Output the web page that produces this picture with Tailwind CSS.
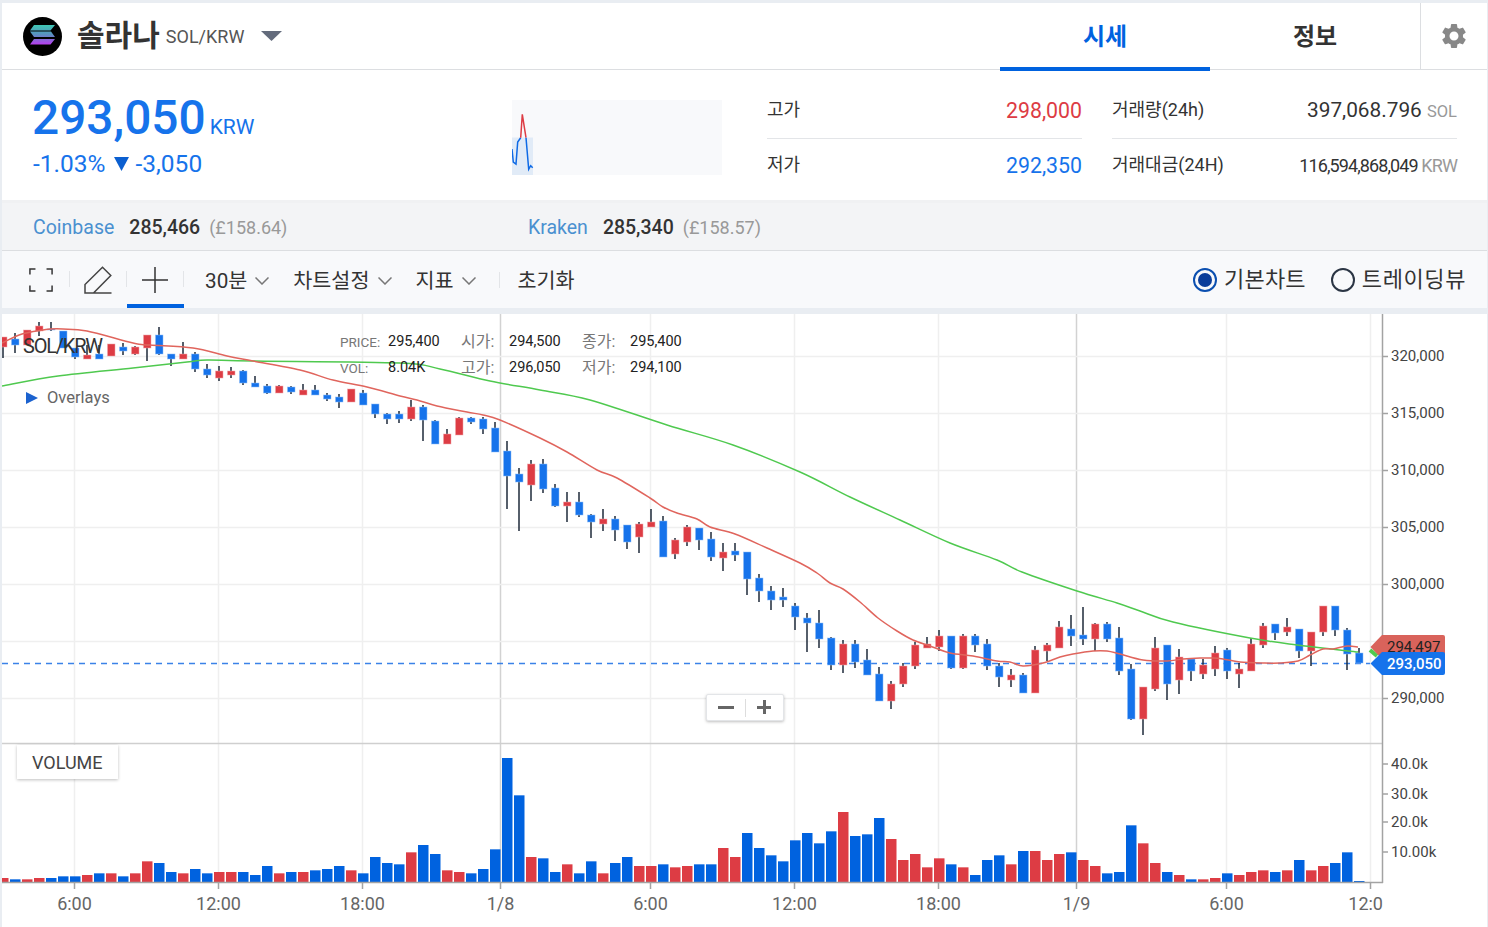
<!DOCTYPE html>
<html lang="ko">
<head>
<meta charset="utf-8">
<title>솔라나 SOL/KRW</title>
<script src="https://cdn.jsdelivr.net/npm/@tailwindcss/browser@4"></script>
</head>
<body class="bg-[#e9edf2] font-[Roboto,'Noto_Sans_CJK_KR',sans-serif] text-[#333] overflow-hidden">
<div class="ml-[2px] mr-[1px] pt-[3px] w-[1485px]">

  <!-- 헤더 -->
  <header class="flex items-center h-[67px] bg-white border-b border-[#dcdee1]">
    <svg class="ml-[21px] w-[39px] h-[39px] shrink-0" viewBox="0 0 39 39">
      <defs>
        <linearGradient id="sol" x1="0" y1="0" x2="0" y2="1">
          <stop offset="0" stop-color="#3fc8b4"/>
          <stop offset="0.5" stop-color="#5a8fc0"/>
          <stop offset="1" stop-color="#b93df0"/>
        </linearGradient>
      </defs>
      <circle cx="19.5" cy="19.5" r="19.5" fill="#000"/>
      <path fill="url(#sol)" d="M11 8h21l-4.500 5.500H7zM7 14.500h21l4 5.500H11zM11 22h21l-4.500 5.500H7z"/>
    </svg>
    <span class="ml-[15px] text-[30px] font-bold leading-none text-[#333]">솔라나</span>
    <span class="ml-[6px] text-[18px] text-[#555] mt-[1px]">SOL/KRW</span>
    <svg class="ml-[17px] w-[21px] h-[10px]" viewBox="0 0 21 10"><path d="M0 0h21L10.500 10z" fill="#636b7c"/></svg>
    <div class="ml-auto flex h-full">
      <div class="relative w-[210px] flex items-center justify-center pt-[2px] text-[24px] font-bold text-[#0062df]">
        시세
        <span class="absolute left-0 right-0 bottom-[-2px] h-[4px] bg-[#0062df]"></span>
      </div>
      <div class="w-[210px] flex items-center justify-center pt-[2px] text-[24px] font-bold text-[#333]">정보</div>
      <div class="w-[67px] border-l border-[#dcdee1] flex items-center justify-center">
        <svg class="w-[30px] h-[30px]" viewBox="0 0 24 24"><path fill="#888" d="M19.140 12.940c.040-.300.060-.610.060-.940 0-.320-.020-.640-.070-.940l2.030-1.580a.490.490 0 0 0 .120-.610l-1.920-3.320a.488.488 0 0 0-.590-.220l-2.390.960c-.500-.380-1.030-.700-1.620-.940l-.360-2.540a.484.484 0 0 0-.480-.410h-3.840c-.240 0-.430.170-.470.410l-.360 2.540c-.590.240-1.130.570-1.620.940l-2.390-.960c-.220-.080-.470 0-.590.220L2.740 8.870c-.120.210-.080.470.120.610l2.030 1.580c-.050.300-.090.630-.090.940s.020.640.070.940l-2.030 1.580a.490.490 0 0 0-.120.610l1.920 3.320c.120.220.370.290.590.220l2.390-.960c.500.380 1.030.700 1.620.940l.360 2.540c.050.240.240.410.480.410h3.840c.240 0 .440-.170.470-.410l.360-2.540c.590-.240 1.130-.560 1.620-.940l2.390.960c.220.080.470 0 .590-.220l1.920-3.320c.120-.220.070-.470-.120-.610l-2.010-1.580zM12 15.600c-1.980 0-3.600-1.620-3.600-3.600s1.620-3.600 3.600-3.600 3.600 1.620 3.600 3.600-1.620 3.600-3.600 3.600z"/></svg>
      </div>
    </div>
  </header>

  <!-- 현재가 -->
  <section class="flex h-[133px] bg-white border-b-[3px] border-[#f0f1f3]">
    <div class="w-[510px] pl-[30px] pt-[17px]">
      <div class="flex items-baseline text-[#1673eb]">
        <span class="text-[47.800px] font-medium leading-[62px]">293,050</span>
        <span class="ml-[4px] text-[21px]">KRW</span>
      </div>
      <div class="flex items-center ml-[1px] text-[24.500px] leading-[30px] text-[#1673eb]">
        <span>-1.03%</span>
        <svg class="ml-[9px] w-[15px] h-[14px]" viewBox="0 0 15 14"><path d="M0 0h15L7.500 14z" fill="#0b5fd0"/></svg>
        <span class="ml-[6px]">-3,050</span>
      </div>
    </div>
    <div class="mt-[30px] w-[210px] h-[75px] bg-[#f8f9fb] relative">
      <svg class="absolute inset-0" width="210" height="75" viewBox="512 100 210 75">
        <rect x="512" y="137.500" width="21" height="37.500" fill="#e1ebf7"/>
        <polyline fill="none" stroke="#0e6ae6" stroke-width="1.500" points="512,149 513.300,162 516,164 517.700,142 520.700,137.700"/>
        <polyline fill="none" stroke="#dd3c44" stroke-width="1.500" points="520.700,137.700 522.300,114.300 526,137.700"/>
        <polyline fill="none" stroke="#0e6ae6" stroke-width="1.500" points="526,137.700 528.700,169.300 530.700,165.700 532.700,167.700"/>
      </svg>
    </div>
    <div class="ml-[45px] w-[315px] pt-[14px]">
      <div class="flex items-center justify-between h-[55px] border-b border-[#e3e5e8]">
        <span class="text-[18px] -mt-[4px]">고가</span>
        <span class="text-[21.300px] text-[#dd3c44]">298,000</span>
      </div>
      <div class="flex items-center justify-between h-[54px]">
        <span class="text-[18px] -mt-[3px]">저가</span>
        <span class="text-[21.300px] text-[#1673eb]">292,350</span>
      </div>
    </div>
    <div class="ml-[30px] w-[345px] pt-[14px]">
      <div class="flex items-center justify-between h-[55px] border-b border-[#e3e5e8]">
        <span class="text-[18px] -mt-[4px]">거래량(24h)</span>
        <span class="text-[20.800px]">397,068.796 <span class="text-[16.500px] text-[#999]">SOL</span></span>
      </div>
      <div class="flex items-center justify-between h-[54px]">
        <span class="text-[18px] -mt-[3px]">거래대금(24H)</span>
        <span class="text-[18px] -mt-[1px] tracking-[-.9px]">116,594,868,049 <span class="text-[#999]">KRW</span></span>
      </div>
    </div>
  </section>

  <!-- 거래소 시세 -->
  <section class="flex items-center h-[48px] pt-[3px] bg-[#f3f4f6] border-b border-[#dcdee1] text-[19.500px]">
    <div class="w-[495px] pl-[31px] flex items-baseline">
      <span class="text-[#4a90d0]">Coinbase</span>
      <span class="ml-[15px] font-medium text-[#333]">285,466</span>
      <span class="ml-[9px] text-[18px] text-[#999]">(£158.64)</span>
    </div>
    <div class="pl-[31px] flex items-baseline">
      <span class="text-[#4a90d0]">Kraken</span>
      <span class="ml-[15px] font-medium text-[#333]">285,340</span>
      <span class="ml-[9px] text-[18px] text-[#999]">(£158.57)</span>
    </div>
  </section>

  <!-- 차트 툴바 -->
  <section class="flex items-center h-[57px] bg-[#f8f9fb] pl-[11px]">
    <div class="relative w-[57px] h-full flex items-center justify-center pr-[1px]">
      <svg class="w-[24px] h-[24px]" viewBox="0 0 26 26" fill="none" stroke="#333" stroke-width="1.600">
        <path d="M1 7V1h6M19 1h6v6M25 19v6h-6M7 25H1v-6"/>
      </svg>
      <span class="absolute right-0 top-[20px] h-[16px] w-px bg-[#e3e5e8]"></span>
    </div>
    <div class="relative w-[57px] h-full flex items-center justify-center pr-[2px]">
      <svg class="w-[28px] h-[28px]" viewBox="0 0 28 28" fill="none" stroke="#444" stroke-width="1.500">
        <path d="M1 27v-8.500L18.500 1.200 26.800 9.500 9.500 27zM1 27h8.500M9.500 27h18"/>
      </svg>
      <span class="absolute right-0 top-[20px] h-[16px] w-px bg-[#e3e5e8]"></span>
    </div>
    <div class="relative w-[57px] h-full flex items-center justify-center pr-[1px]">
      <svg class="w-[26px] h-[26px]" viewBox="0 0 26 26" fill="none" stroke="#333" stroke-width="1.500">
        <path d="M13 0v26M0 13h26"/>
      </svg>
      <span class="absolute left-0 right-0 bottom-0 h-[4px] bg-[#0062df]"></span>
      <span class="absolute right-0 top-[20px] h-[16px] w-px bg-[#e3e5e8]"></span>
    </div>
    <button class="ml-[21px] mt-[4px] flex items-center text-[20.700px]">30분
      <svg class="ml-[8px] w-[14px] h-[8px]" viewBox="0 0 14 8" fill="none" stroke="#777" stroke-width="1.500"><path d="M.5.500L7 7 13.500.500"/></svg>
    </button>
    <button class="ml-[24px] mt-[4px] flex items-center text-[20.700px]">차트설정
      <svg class="ml-[9px] w-[14px] h-[8px]" viewBox="0 0 14 8" fill="none" stroke="#777" stroke-width="1.500"><path d="M.5.500L7 7 13.500.500"/></svg>
    </button>
    <button class="ml-[23px] mt-[4px] flex items-center text-[20.700px]">지표
      <svg class="ml-[8px] w-[14px] h-[8px]" viewBox="0 0 14 8" fill="none" stroke="#777" stroke-width="1.500"><path d="M.5.500L7 7 13.500.500"/></svg>
    </button>
    <span class="ml-[23px] h-[16px] w-px bg-[#e3e5e8]"></span>
    <button class="ml-[18px] mt-[4px] text-[20.700px]">초기화</button>
    <div class="ml-auto flex items-center pr-[21px] text-[22px]">
      <span class="w-[24px] h-[24px] rounded-full border-2 border-[#0b4fb0] flex items-center justify-center">
        <span class="w-[14px] h-[14px] rounded-full bg-[#0a3d9a]"></span>
      </span>
      <span class="ml-[7px] tracking-[.2px]">기본차트</span>
      <span class="ml-[25px] w-[24px] h-[24px] rounded-full border-2 border-[#2b3544]"></span>
      <span class="ml-[7px] tracking-[.6px]">트레이딩뷰</span>
    </div>
  </section>

  <!-- 차트 -->
  <section class="relative mt-[6px] h-[613px] bg-white overflow-hidden">
    <svg id="chart" class="block" width="1485" height="613" viewBox="2 314 1485 613"></svg>

    <div class="absolute left-[21px] top-[19px] text-[20px] leading-[26px] tracking-[-1.200px] text-[#333]">SOL/KRW</div>
    <div class="absolute left-[338px] top-[15px] grid grid-cols-[48px_73px_48px_73px_48px_60px] text-[14.500px] leading-[26px] text-[#222]">
      <span class="text-[13.500px] text-[#777]">PRICE:</span><span>295,400</span>
      <span class="text-[16px] text-[#777]">시가:</span><span>294,500</span>
      <span class="text-[16px] text-[#777]">종가:</span><span>295,400</span>
      <span class="text-[13.500px] text-[#777]">VOL:</span><span>8.04K</span>
      <span class="text-[16px] text-[#777]">고가:</span><span>296,050</span>
      <span class="text-[16px] text-[#777]">저가:</span><span>294,100</span>
    </div>
    <div class="absolute left-[24px] top-[72px] flex items-center text-[16.500px] text-[#666]">
      <svg class="w-[12px] h-[12px]" viewBox="0 0 12 12"><path d="M0 0l12 6-12 6z" fill="#1b62cf"/></svg>
      <span class="ml-[9px]">Overlays</span>
    </div>
    <div class="absolute left-[704px] top-[380px] w-[78px] h-[27px] flex items-center bg-white border border-[#e3e5e8] rounded-[2px] shadow-[0_1px_3px_rgba(0,0,0,0.25)]">
      <span class="flex-1 flex justify-center"><span class="w-[16px] h-[3px] bg-[#666]"></span></span>
      <span class="w-px h-[18px] bg-[#ddd]"></span>
      <span class="flex-1 flex justify-center relative"><span class="w-[14px] h-[3px] bg-[#666]"></span><span class="absolute top-[-6px] w-[3px] h-[14px] bg-[#666]"></span></span>
    </div>
    <div class="absolute left-[15px] top-[431px] w-[101px] h-[34px] flex items-center pl-[15px] bg-white shadow-[0_1px_3px_rgba(0,0,0,0.25)] text-[18px] text-[#444]">VOLUME</div>
  </section>
</div>

<script>
// [k 위치는 x = 3 + 12k] [색, 몸통 위, 몸통 아래, 꼬리 위, 꼬리 아래]
var candles = [
  ['r',337,347,337,358],['b',339,345,333,353],['r',330,345,330,345],['r',326,331,322,336],['b',329,330,322,331],
  ['b',331,348,331,348],['b',348,357,348,359],['r',355,359,345,359],['b',354,359,345,359],['r',344,356,344,356],
  ['b',347,351,343,355],['r',347,354,346,355],['r',335,348,335,361],['b',335,354,327,355],['b',354,359,354,366],
  ['r',354,359,342,359],['b',354,369,352,372],['b',369,375,364,378],['r',371,378,366,381],['r',371,375,367,378],
  ['b',371,383,370,385],['b',383,387,376,387],['b',386,393,384,394],['r',386,393,385,393],['b',387,392,386,394],
  ['r',390,395,384,395],['b',390,395,385,395],['b',395,399,393,401],['b',397,402,394,408],['r',389,402,389,402],
  ['b',393,405,390,405],['b',404,414,404,418],['b',414,419,413,424],['b',414,419,411,423],['r',407,419,400,421],
  ['b',407,420,405,441],['b',421,444,420,444],['r',434,444,429,444],['r',418,435,417,435],['b',418,422,417,424],
  ['b',419,429,417,434],['b',428,452,422,452],['b',451,476,441,509],['b',474,482,468,531],['r',464,485,460,501],
  ['b',464,489,459,493],['b',488,506,484,507],['r',502,506,492,522],['b',502,515,492,517],['b',515,522,514,538],
  ['r',519,524,509,531],['b',519,530,516,541],['b',525,542,525,549],['r',524,537,522,553],['r',522,527,509,527],
  ['b',521,557,516,557],['r',540,554,538,559],['r',527,542,525,546],['b',528,540,528,550],['b',539,557,532,561],
  ['r',552,558,543,571],['b',551,555,543,561],['b',552,579,552,595],['b',578,591,574,602],['b',591,600,586,610],
  ['b',597,600,588,607],['b',606,617,603,630],['b',618,623,613,652],['b',623,639,610,648],['b',638,665,637,670],
  ['r',644,665,640,673],['b',644,662,640,668],['b',660,675,649,675],['b',674,701,667,701],['r',684,701,681,709],
  ['r',666,684,663,687],['r',645,666,642,669],['r',644,648,637,648],['r',636,647,630,651],['b',636,668,636,669],
  ['r',636,668,634,669],['b',636,645,634,652],['b',644,666,639,670],['b',666,677,663,687],['r',675,680,669,687],
  ['b',675,693,673,693],['r',650,693,646,693],['r',645,651,643,661],['r',627,648,621,648],['b',629,636,615,646],
  ['b',635,639,607,645],['r',624,639,623,651],['b',624,639,622,642],['b',638,671,627,675],['b',669,719,664,720],
  ['r',687,719,687,735],['r',648,689,637,691],['b',645,684,645,700],['r',657,680,649,694],['b',659,671,659,681],
  ['r',665,674,659,679],['r',653,669,646,676],['b',650,671,648,679],['r',669,674,663,688],['r',644,671,638,671],
  ['r',626,645,623,648],['b',624,633,624,640],['r',627,632,618,636],['b',629,651,629,658],['r',632,651,632,666],
  ['r',606,632,606,636],['b',606,630,606,636],['b',630,654,628,670],['b',653,663,648,663]
];
// 거래량 막대 윗변 (y = 740 + v / 3)
var volumes = [
  ['r',414],['b',418],['r',418],['r',414],['b',414],['b',409],['b',409],['r',405],['b',400],['r',400],
  ['b',409],['r',400],['r',364],['b',369],['b',396],['r',400],['b',387],['b',400],['r',396],['r',396],
  ['b',396],['b',405],['b',378],['r',400],['b',396],['r',396],['b',391],['b',387],['b',378],['r',391],
  ['b',400],['b',351],['b',369],['b',373],['r',337],['b',315],['b',342],['r',391],['r',396],['b',400],
  ['b',387],['b',328],['b',54],['b',166],['r',351],['b',355],['b',396],['r',373],['b',400],['b',364],
  ['r',400],['b',369],['b',351],['r',378],['r',378],['b',373],['r',382],['r',378],['b',373],['b',373],
  ['r',324],['r',351],['b',279],['b',324],['b',346],['b',364],['b',301],['b',279],['b',310],['b',274],
  ['r',216],['b',288],['b',283],['b',234],['r',297],['r',360],['r',342],['r',382],['r',355],['b',373],
  ['r',382],['b',405],['b',360],['b',346],['r',373],['b',333],['r',333],['r',360],['r',342],['b',337],
  ['r',360],['r',378],['b',400],['b',396],['b',256],['r',310],['r',369],['b',396],['r',405],['b',418],
  ['r',418],['r',414],['b',400],['r',405],['r',396],['r',391],['b',396],['r',391],['b',360],['r',391],
  ['r',378],['b',369],['b',337],['b',423]
];
var maRed = [[2,343],[22,334],[43,330],[50,329],[63,329],[87,331],[133,343],[150,345],[193,348],[227,356],[253,361],[300,370],[333,380],[367,387],[400,396],[417,400],[437,406],[467,412],[483,415],[500,420],[540,438],[567,452],[597,470],[617,478],[650,498],[663,507],[677,513],[697,519],[710,527],[735,534],[767,548],[800,563],[817,573],[830,583],[843,589],[860,602],[878,618],[897,631],[913,640],[930,646],[950,653],[973,656],[997,661],[1010,662],[1023,666],[1043,663],[1060,657],[1073,654],[1093,651],[1107,651],[1120,654],[1143,660],[1167,661],[1183,659],[1200,658],[1213,658],[1223,659],[1240,662],[1263,663],[1280,663],[1298,661],[1310,655],[1323,649],[1333,649],[1347,646],[1358,647]];
var maGreen = [[2,386],[58,376],[133,368],[187,362],[207,360],[253,361],[400,363],[440,369],[490,381],[540,390],[590,400],[667,425],[733,445],[800,472],[850,497],[900,520],[950,543],[997,560],[1022,572],[1077,591],[1117,603],[1140,611],[1173,622],[1250,638],[1297,645],[1358,652]];

// 꺾인 점들을 부드러운 곡선으로
function smooth(p) {
  var d = 'M' + p[0][0] + ' ' + p[0][1];
  for (var i = 0; i < p.length - 1; i++) {
    var a = p[i - 1] || p[i], b = p[i], c = p[i + 1], e = p[i + 2] || c;
    d += 'C' + (b[0] + (c[0] - a[0]) / 6) + ' ' + (b[1] + (c[1] - a[1]) / 6) + ' ' +
         (c[0] - (e[0] - b[0]) / 6) + ' ' + (c[1] - (e[1] - b[1]) / 6) + ' ' + c[0] + ' ' + c[1];
  }
  return d;
}

var gridX = [[74.5,0],[218.5,0],[362.5,0],[500.5,1],[650.5,0],[794.5,0],[938.5,0],[1076.5,1],[1226.5,0],[1370.5,0]];
var timeLabels = ['6:00','12:00','18:00','1/8','6:00','12:00','18:00','1/9','6:00','12:0'];
var priceTicks = [[356.5,'320,000'],[413.5,'315,000'],[470.5,'310,000'],[527.5,'305,000'],[584.5,'300,000'],[641.5,''],[698.5,'290,000']];
var volTicks = [[764,'40.0k'],[794,'30.0k'],[822,'20.0k'],[852,'10.00k']];
var BLUE = '#1673eb', RED = '#dd3c44', VBLUE = '#0062df', GREY = '#a3a3a3';
var font = 'font-family="Roboto,sans-serif"';
var s = '';

gridX.forEach(function (g) {
  s += '<line x1="'+g[0]+'" y1="314" x2="'+g[0]+'" y2="882" stroke="'+(g[1]?'#d2d2d2':'#efefef')+'" stroke-width="1.5"/>';
});
priceTicks.forEach(function (t) {
  s += '<line x1="2" y1="'+t[0]+'" x2="1383" y2="'+t[0]+'" stroke="#efefef" stroke-width="1.5"/>';
});
s += '<line x1="2" y1="663.5" x2="1370" y2="663.5" stroke="#3b82e8" stroke-width="1.5" stroke-dasharray="6 5"/>';

candles.forEach(function (c, k) {
  var x = 3 + 12 * k;
  s += '<line x1="'+x+'" y1="'+c[3]+'" x2="'+x+'" y2="'+c[4]+'" stroke="#1e2a3a" stroke-width="1.5"/>';
  s += '<rect x="'+(x-3.5)+'" y="'+c[1]+'" width="7.5" height="'+(c[2]-c[1])+'" fill="'+(c[0]=='r'?RED:BLUE)+'" stroke="'+(c[0]=='r'?'#f0a5a9':'#8dbcf5')+'" stroke-width="0.5"/>';
});
s += '<path d="'+smooth(maGreen)+'" fill="none" stroke="#4fc94f" stroke-width="1.5"/>';
s += '<path d="'+smooth(maRed)+'" fill="none" stroke="#e0655d" stroke-width="1.5"/>';

// 패널 구분선, 축
s += '<line x1="2" y1="743.5" x2="1383" y2="743.5" stroke="#cfcfcf" stroke-width="1.5"/>';
volumes.forEach(function (v, k) {
  var top = 740 + v[1] / 3;
  s += '<rect x="'+(3 + 12 * k - 5)+'" y="'+top+'" width="10.5" height="'+(882 - top)+'" fill="'+(v[0]=='r'?RED:VBLUE)+'"/>';
});
s += '<line x1="2" y1="882.5" x2="1383" y2="882.5" stroke="'+GREY+'" stroke-width="1.5"/>';
s += '<line x1="1382.5" y1="314" x2="1382.5" y2="883" stroke="'+GREY+'" stroke-width="1.5"/>';

gridX.forEach(function (g, i) {
  s += '<line x1="'+g[0]+'" y1="882" x2="'+g[0]+'" y2="889" stroke="'+GREY+'" stroke-width="1.5"/>';
  var anchor = i == 9 ? 'end' : 'middle', tx = i == 9 ? 1383 : g[0];
  s += '<text x="'+tx+'" y="910" text-anchor="'+anchor+'" '+font+' font-size="18" fill="#666">'+timeLabels[i]+'</text>';
});
priceTicks.forEach(function (t) {
  s += '<line x1="1383" y1="'+t[0]+'" x2="1388" y2="'+t[0]+'" stroke="'+GREY+'" stroke-width="1.5"/>';
  if (t[1]) s += '<text x="1391" y="'+(t[0]+4.5)+'" '+font+' font-size="15" fill="#444">'+t[1]+'</text>';
});
volTicks.forEach(function (t) {
  s += '<line x1="1383" y1="'+t[0]+'" x2="1388" y2="'+t[0]+'" stroke="'+GREY+'" stroke-width="1.5"/>';
  s += '<text x="1391" y="'+(t[0]+5)+'" '+font+' font-size="15" fill="#444">'+t[1]+'</text>';
});

// 가격 라벨
s += '<path d="M1370 650l7 6" stroke="#4fc94f" stroke-width="4"/>';
s += '<path d="M1370.5 647L1382 635h61q2 0 2 2v22h-63z" fill="#d9635b"/>';
s += '<text x="1387" y="652" '+font+' font-size="15" fill="#222">294,497</text>';
s += '<path d="M1370.5 663.5L1382 652h61q2 0 2 2v19q0 2-2 2h-61z" fill="'+BLUE+'"/>';
s += '<text x="1387" y="669" '+font+' font-weight="500" font-size="15" fill="#fff">293,050</text>';

document.getElementById('chart').innerHTML = s;
</script>
</body>
</html>
